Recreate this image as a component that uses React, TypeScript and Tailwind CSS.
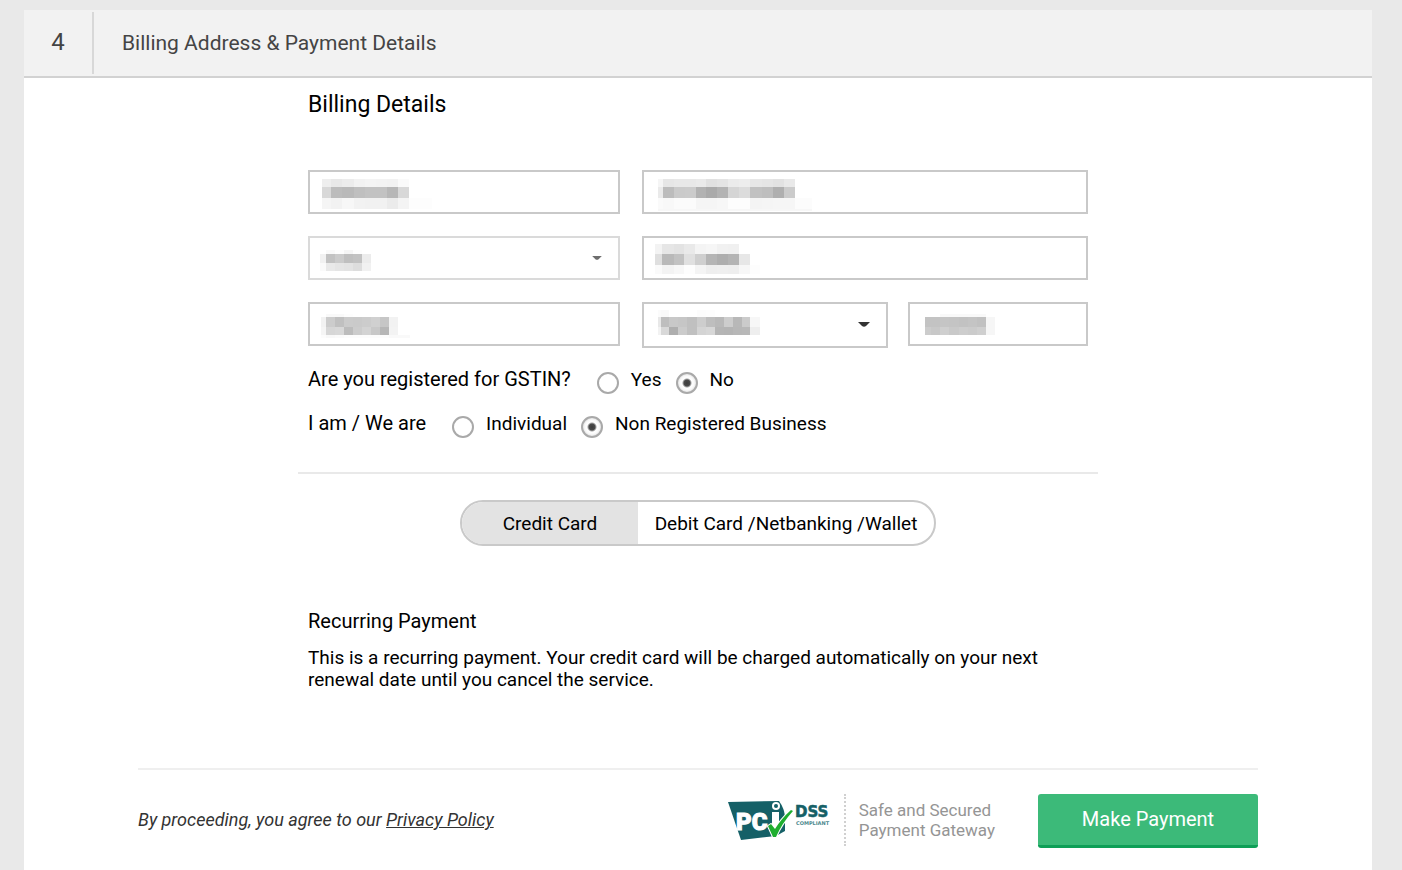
import { useState } from 'react'
import type { ReactNode } from 'react'
import clsx from 'clsx'

interface MaskData {
  x: number; y: number
  cols: number[]; rows: number[]
  shades: string[]
}

// each shade is a two digit grey level, one per cell
const masks: Record<string, MaskData> = {
  address: {
    x: 14, y: 9, cols: [9, 11, 12, 11, 11, 11, 11, 11, 23], rows: [8, 11, 11],
    shades: ['ee e8 ec f2 f4 f3 f2 fa ff', 'd8 bc b9 bf c2 c2 b7 d8 ff', 'f5 f2 f7 f2 f1 f1 eb f4 fd'],
  },
  street: {
    x: 16, y: 9, cols: [5, 11, 11, 11, 10, 11, 11, 11, 11, 12, 11, 11, 11, 17], rows: [8, 11, 11, 2],
    shades: [
      'f5 e6 e8 e8 ea e1 e4 eb ed e7 e5 e2 e9 ff',
      'ea bc ca cb b2 aa b3 d5 dc c1 be af cb ff',
      'fa f8 fb fb f5 f5 f7 fd fd f4 f5 f6 f6 fc',
      'f7 f7 f7 f7 f7 f7 f7 f7 f7 f7 f7 f7 f7 f7',
    ],
  },
  country: {
    x: 12, y: 14, cols: [6, 9, 9, 9, 9, 9], rows: [4, 9, 8],
    shades: ['ff f9 fd f5 fd ff', 'f1 c2 cb bf c2 ec', 'fa e9 e5 e3 dd f1'],
  },
  area: {
    x: 13, y: 8, cols: [7, 12, 10, 11, 11, 11, 11, 11, 11, 10], rows: [10, 11, 9],
    shades: ['f3 e6 e3 e9 f4 f6 f1 f0 ff ff', 'df b9 c2 e0 cf b5 ae b4 e7 ff', 'fa f3 f7 fd f4 ee ef ee f7 fd'],
  },
  city: {
    x: 13, y: 12, cols: [5, 9, 9, 9, 9, 9, 9, 9, 9, 12], rows: [3, 10, 8, 3],
    shades: [
      'ff f9 f9 fd ff ff ff ff ff ff',
      'f2 cc c0 cb ca cc d0 c6 f2 ff',
      'f5 d6 d8 bc cc d3 c8 b6 f3 ff',
      'fc f8 fa fc fc fc fc fc f9 f9',
    ],
  },
  state: {
    x: 16, y: 8, cols: [3, 8, 9, 9, 10, 9, 9, 9, 9, 9, 8, 10], rows: [7, 10, 8],
    shades: [
      'fb f9 ff ff ff fc fd ff ff ff ff ff',
      'e8 be c8 c6 c0 cd be b9 cd b8 cb f7',
      'f2 d8 ae cb c0 d4 d7 b5 b4 b7 b8 ee',
    ],
  },
  zip: {
    x: 17, y: 12, cols: [6, 9, 9, 10, 9, 9, 9, 9], rows: [3, 10, 8],
    shades: ['ff ff f9 f9 f9 f9 f9 ff', 'c3 c3 c5 c4 c2 c4 c1 f6', 'cc c8 cf c9 cd cb cf f6'],
  },
}

const sum = (list: number[]) => list.reduce((a, b) => a + b, 0)

function Mask({ name }: { name: string }) {
  const { x, y, cols, rows, shades } = masks[name]
  return (
    <svg className="absolute inset-0 h-full w-full pointer-events-none" shapeRendering="crispEdges" aria-hidden="true">
      {shades.map((row, r) => row.split(' ').map((s, c) => (
        <rect key={`${r}-${c}`} x={x + sum(cols.slice(0, c))} y={y + sum(rows.slice(0, r))}
          width={cols[c]} height={rows[r]} fill={`#${s}${s}${s}`} />
      )))}
    </svg>
  )
}

function TextField({ name, label }: { name: string; label: string }) {
  return (
    <div className="relative h-11">
      <input type="text" name={name} aria-label={label}
        className="block h-full w-full border-2 border-[#c9c9c9] bg-white px-3 text-lg outline-none focus:border-gray-400" />
      <Mask name={name} />
    </div>
  )
}

function SelectField({ name, label, disabled }: { name: string; label: string; disabled?: boolean }) {
  return (
    <div className={clsx('relative', disabled ? 'h-11' : 'h-[46px]')}>
      <select name={name} aria-label={label} disabled={disabled}
        className={clsx(
          'block h-full w-full appearance-none border-2 bg-white px-3 text-lg outline-none',
          disabled ? 'border-[#dadada]' : 'border-[#c9c9c9]'
        )}>
        <option value="" />
      </select>
      <Mask name={name} />
      <svg viewBox="0 0 12 5" aria-hidden="true"
        className={clsx(
          'absolute pointer-events-none right-[18px] top-5',
          disabled ? 'h-1 w-[10px] fill-[#6e6e6e]' : 'h-[5px] w-3 fill-[#333333]'
        )}>
        <path d="M0 0H12L8 4Q6 5.5 4 4Z" />
      </svg>
    </div>
  )
}

function Radio({ name, checked, onChange, children }: {
  name: string; checked: boolean; onChange: () => void; children: ReactNode
}) {
  return (
    <label className="flex items-center gap-3 text-[19px] leading-6">
      <input type="radio" name={name} checked={checked} onChange={onChange}
        className="mt-1.5 size-[22px] shrink-0 appearance-none rounded-full border-2 border-[#a9a9a9] bg-white checked:bg-[radial-gradient(circle,#3c3c3c_0,#4a4a4a_3px,#ffffff_5px,#fafafa_7px,#dcdcdc_10px)]" />
      {children}
    </label>
  )
}

function PciLogo() {
  return (
    <svg width="104" height="42" viewBox="0 0 104 42" role="img" aria-label="PCI DSS Compliant">
      <path d="M0 3L51 2Q57 10 57 20V32L48 37L13 41Z" fill="#156067" />
      <text x="8" y="31" fontSize="24" fontWeight="900" fill="#ffffff" stroke="#ffffff" strokeWidth="1">PC</text>
      <path d="M44 13H51V31H44Z" fill="#ffffff" />
      <circle cx="48" cy="7" r="4" fill="#ffffff" />
      <circle cx="48" cy="7" r="2" fill="#156067" />
      <path d="M40 27L43 25L47 30Q53 20 63 11L65 12Q54 24 48 38H45Z" fill="#1fae2f" stroke="#ffffff" strokeWidth="2" paintOrder="stroke" />
      <g className="font-['DejaVu_Sans',sans-serif] font-bold">
        <text x="67" y="18" fontSize="15" fill="#156067" stroke="#156067" strokeWidth="0.5">DSS</text>
        <text x="68" y="26" fontSize="5" fill="#4d898e">COMPLIANT</text>
      </g>
    </svg>
  )
}

export default function App() {
  const [gstin, setGstin] = useState('no')
  const [entity, setEntity] = useState('business')
  const [method, setMethod] = useState('credit')

  return (
    <div className="min-h-screen bg-[#e9e9e9] pt-[10px] pr-[30px] pl-6 font-['Roboto',sans-serif] text-black flex flex-col">
      <header className="flex h-[68px] items-stretch border-b-2 border-[#d2d2d2] bg-[#f2f2f2] py-0.5 text-[#444444]">
        <div className="w-[70px] border-r-2 border-[#d8d8d8] text-center text-2xl leading-[60px]">4</div>
        <h1 className="pl-7 text-[21px] leading-[62px]">Billing Address &amp; Payment Details</h1>
      </header>

      <main className="flex-1 bg-white px-5 pt-3">
        <form className="mx-auto max-w-[1120px]" onSubmit={e => e.preventDefault()}>
          <div className="mx-auto max-w-[800px]">
            <section className="border-b-2 border-[#e9e9e9] px-[10px] pb-8">
              <h2 className="mb-[50px] text-[23px] leading-[30px]">Billing Details</h2>

              <div className="grid grid-cols-[312fr_446fr] gap-[22px]">
                <TextField name="address" label="Address" />
                <TextField name="street" label="Street" />
                <SelectField name="country" label="Country" disabled />
                <TextField name="area" label="Area" />
                <TextField name="city" label="City" />
                <div className="grid grid-cols-[246fr_180fr] gap-5">
                  <SelectField name="state" label="State" />
                  <TextField name="zip" label="Zip code" />
                </div>
              </div>

              <fieldset className="mt-4 flex h-8 items-center gap-[14px]">
                <legend className="float-left mr-3 pb-0.5 text-xl leading-[30px]">Are you registered for GSTIN?</legend>
                <Radio name="gstin" checked={gstin === 'yes'} onChange={() => setGstin('yes')}>Yes</Radio>
                <Radio name="gstin" checked={gstin === 'no'} onChange={() => setGstin('no')}>No</Radio>
              </fieldset>
              <fieldset className="mt-3 flex h-8 items-center gap-[14px]">
                <legend className="float-left mr-3 pb-0.5 text-xl leading-[30px]">I am / We are</legend>
                <Radio name="entity" checked={entity === 'individual'} onChange={() => setEntity('individual')}>Individual</Radio>
                <Radio name="entity" checked={entity === 'business'} onChange={() => setEntity('business')}>Non Registered Business</Radio>
              </fieldset>
            </section>

            <div className="mx-auto mt-[26px] flex h-[46px] w-fit overflow-hidden rounded-full border-2 border-[#c9c9c9] text-[19px]">
              <button type="button" aria-pressed={method === 'credit'} onClick={() => setMethod('credit')}
                className={clsx('w-44 pt-0.5', method === 'credit' && 'bg-[#e3e3e3]')}>
                Credit Card
              </button>
              <button type="button" aria-pressed={method === 'debit'} onClick={() => setMethod('debit')}
                className={clsx('w-[296px] pt-0.5', method === 'debit' && 'bg-[#e3e3e3]')}>
                Debit Card /Netbanking /Wallet
              </button>
            </div>

            <section className="mt-[60px] px-[10px]">
              <h3 className="text-xl leading-[30px]">Recurring Payment</h3>
              <p className="mt-[11px] max-w-[740px] text-[19px] leading-[22px]">
                This is a recurring payment. Your credit card will be charged automatically on your next
                renewal date until you cancel the service.
              </p>
            </section>
          </div>

          <footer className="mt-[77px] flex items-center border-t-2 border-[#efefef] pt-6">
            <p className="pb-0.5 text-lg italic text-[#333333]">
              By proceeding, you agree to our <a href="#privacy" className="underline">Privacy Policy</a>
            </p>
            <div className="ml-auto mr-10 flex items-center pb-0.5">
              <PciLogo />
              <p className="ml-3 border-l-2 border-dotted border-[#d0d0d0] py-1.5 pr-[3px] pl-[13px] text-[17px] leading-5 text-[#959595]">
                Safe and Secured<br />Payment Gateway
              </p>
            </div>
            <button type="submit" className="h-[54px] w-[220px] rounded-[3px] border-b-[3px] border-[#0e9f57] bg-[#3cba79] pb-0.5 text-xl text-white">
              Make Payment
            </button>
          </footer>
        </form>
      </main>
    </div>
  )
}
